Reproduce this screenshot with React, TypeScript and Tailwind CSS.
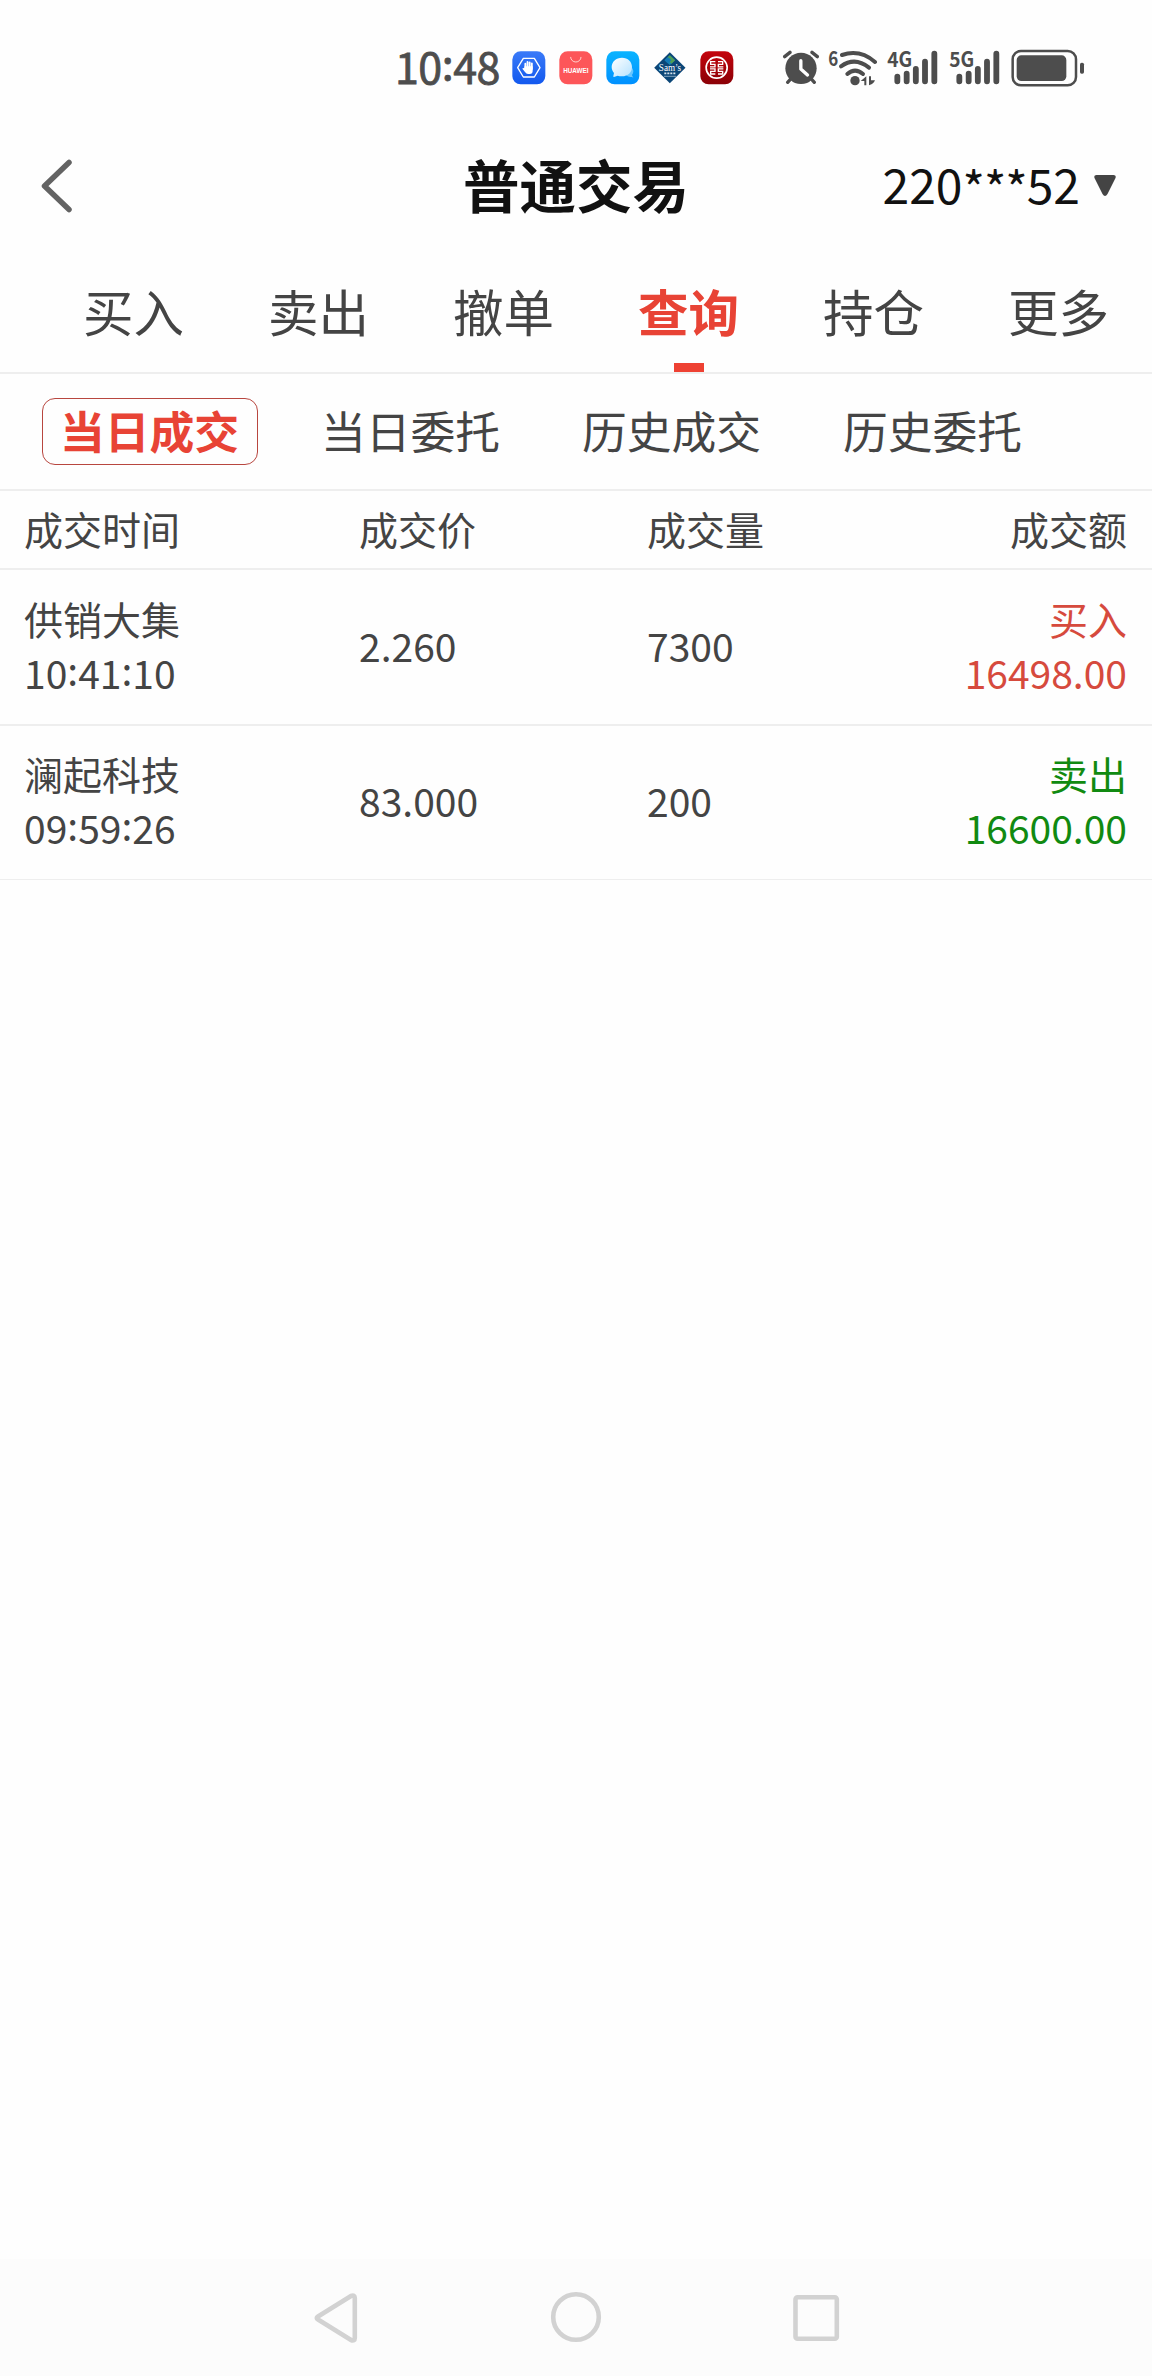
import React from "react";

const FONT = "font-['Noto_Sans_CJK_SC','Noto_Sans',sans-serif]";

function AppIcons() {
  return (
    <svg className="ml-[12px] shrink-0" width="222" height="34" viewBox="395 65 666 102">
      <defs>
        <linearGradient id="guard" x1="0" y1="0" x2="0" y2="1">
          <stop offset="0" stopColor="#3a7af8" />
          <stop offset="1" stopColor="#1258ee" />
        </linearGradient>
        <linearGradient id="chat" x1="0" y1="0" x2="0" y2="1">
          <stop offset="0" stopColor="#0ab4ff" />
          <stop offset="1" stopColor="#0090ff" />
        </linearGradient>
        <linearGradient id="bubble" x1="0" y1="0" x2="1" y2="1">
          <stop offset="0" stopColor="#ffffff" />
          <stop offset="1" stopColor="#b5e2ff" />
        </linearGradient>
        <linearGradient id="bank" x1="0" y1="0" x2="0" y2="1">
          <stop offset="0" stopColor="#c4040c" />
          <stop offset="1" stopColor="#8a0006" />
        </linearGradient>
      </defs>
      <rect x="396" y="66" width="99" height="99" rx="25" fill="url(#guard)" />
      <path d="M429 87h33l17 28-17 28h-33l-17-28z" fill="none" stroke="#fff" strokeWidth="4" strokeLinejoin="round" />
      <path d="M436 119V103M442.500 115V98M449 115V99M455.500 119v-17" stroke="#fff" strokeWidth="5.500" strokeLinecap="round" transform="translate(-1 0)" />
      <path d="M432.500 111h24.500v14q0 9-9 9h-5q-5 0-9-6l-8-10q2-4 6-1z" fill="#fff" />

      <rect x="537" y="66" width="99" height="99" rx="25" fill="#fd5659" />
      <path d="M571 84a15.500 14 0 0 0 31 0" fill="none" stroke="#ffd3cf" strokeWidth="3" strokeLinecap="round" />
      <text x="586.500" y="130" textAnchor="middle" textLength="76" lengthAdjust="spacingAndGlyphs" fontSize="19" fontWeight="700" fill="#fff" className="font-['Liberation_Sans',sans-serif]">HUAWEI</text>

      <rect x="678" y="66" width="99" height="99" rx="25" fill="url(#chat)" />
      <path d="M737 138q10 8 20 4 4 4 0 3 0-4-2-8 8-12 0-22z" fill="#68c6ff" />
      <path d="M725 85c18 0 30 12 30 28s-12 28-30 28c-6 0-9-1-13-2l-11 4q-3 0-2-3l2-9c-4-5-7-11-7-18 0-16 13-28 31-28z" fill="url(#bubble)" />

      <path d="M868.500 69l47 46.500-47 46.500-47-46.500z" fill="#0b4677" />
      <path d="M868.500 78l16 15-16 14-16-14z" fill="#1685b4" />
      <path d="M868.500 78l16 15-11 10-7-8 5-5-10-6z" fill="#4f9e55" />
      <path d="M862 84l11 9-11 9-9-9z" fill="#1478b5" />
      <text x="869" y="125" textAnchor="middle" textLength="67" lengthAdjust="spacingAndGlyphs" fontSize="29" fill="#fff" className="font-['Liberation_Serif',serif]">Sam’s</text>
      <path d="M852 132h34" stroke="#d7e4ee" strokeWidth="5" strokeDasharray="6 3" />
      <path d="M852 141h34" stroke="#9cb8ce" strokeWidth="4" strokeDasharray="4 2" />

      <rect x="960" y="66" width="99" height="99" rx="25" fill="url(#bank)" />
      <circle cx="1009" cy="115" r="31.500" fill="none" stroke="#fff" strokeWidth="5" />
      <path d="M1005 97H991v8h13V112.500H989M1013 97h14v8h-13V112.500h15M989 118.500h15v7.500h-13v8h14M1029 118.500h-15v7.500h13v8h-14" fill="none" stroke="#fff" strokeWidth="4" />
    </svg>
  );
}

function AlarmIcon() {
  return (
    <svg className="ml-[48px] shrink-0" width="38" height="36" viewBox="66 60 114 108">
      <g stroke="#4d4d4d" strokeWidth="10" strokeLinecap="round">
        <path d="M74 80L90 67M156 67l16 13M93 146l-10 11M153 146l10 11" />
      </g>
      <circle cx="123" cy="115" r="47" fill="#4d4d4d" />
      <path d="M122.500 92v25l20 18" fill="none" stroke="#fff" strokeWidth="10" strokeLinecap="round" strokeLinejoin="round" />
    </svg>
  );
}

function WifiIcon() {
  return (
    <svg className="ml-[8px] shrink-0" width="50" height="38" viewBox="204 54 150 114">
      <text x="205" y="104" textLength="30" lengthAdjust="spacingAndGlyphs" fontSize="62" fontWeight="700" fill="#4d4d4d" className="font-['Noto_Sans_CJK_SC',sans-serif]">6</text>
      <g fill="none" stroke="#4d4d4d" strokeWidth="12" strokeLinecap="round">
        <path d="M246 72Q300 54 345 93" />
        <path d="M243 106q42-30 84 4" />
        <path d="M262 129q23-20 47 0" />
      </g>
      <circle cx="285" cy="149" r="14" fill="#4d4d4d" />
      <path d="M319 136v27h-6v-13h-11zM327 163v-27h6v12h12q-2 6-9 11z" fill="#4d4d4d" />
    </svg>
  );
}

function SignalIcon({ label, className }: { label: string; className: string }) {
  return (
    <svg className={className} width="51" height="36" viewBox="380 60 153 108">
      <text x="381" y="110" textLength="75" lengthAdjust="spacingAndGlyphs" fontSize="62" fontWeight="700" fill="#4d4d4d" className="font-['Noto_Sans_CJK_SC',sans-serif]">{label}</text>
      <path d="M411 140v14M439 131v23M466.500 117v37M494 95v59M522 71v83" stroke="#4d4d4d" strokeWidth="17.500" strokeLinecap="round" />
    </svg>
  );
}

function BatteryIcon() {
  return (
    <svg className="ml-[11px] shrink-0" width="74" height="38" viewBox="752 55 222 114">
      <rect x="757" y="61" width="190" height="103" rx="25" fill="none" stroke="#4d4d4d" strokeWidth="7.500" />
      <rect x="769" y="74" width="149" height="77" rx="14" fill="#4d4d4d" />
      <rect x="959" y="96" width="12" height="33" rx="5" fill="#4d4d4d" />
    </svg>
  );
}

function StatusBar() {
  return (
    <div className="flex h-[136px] shrink-0 items-center pl-[395px]">
      <span className="w-[105px] shrink-0 pb-[5px] text-[43px] leading-none tracking-[-0.5px] whitespace-nowrap text-[#4d4d4d] [-webkit-text-stroke:0.8px_#4d4d4d]">
        10<span className="relative -top-[4px]">:</span>48
      </span>
      <AppIcons />
      <AlarmIcon />
      <WifiIcon />
      <SignalIcon label="4G" className="ml-[9px] shrink-0" />
      <SignalIcon label="5G" className="ml-[11px] shrink-0" />
      <BatteryIcon />
    </div>
  );
}

function Header() {
  return (
    <header className="grid h-[100px] shrink-0 grid-cols-[1fr_auto_1fr] items-center pr-[36px] pl-[40px]">
      <svg width="34" height="54" viewBox="0 0 34 54" fill="none" stroke="#636363" strokeWidth="5.5" strokeLinecap="round" strokeLinejoin="round">
        <path d="M29 3.500L4.500 27 29 50.500" />
      </svg>
      <h1 className="mr-[4px] pb-[5px] text-[56.5px] leading-none font-bold text-[#111]">普通交易</h1>
      <div className="flex items-center justify-end">
        <span className="pb-[6px] text-[48px] leading-none text-[#111]">
          220<span className="relative top-[3px] tracking-[-1px]">***</span>52
        </span>
        <svg className="ml-[14px]" width="22" height="22" viewBox="0 0 22 22" fill="#444">
          <path d="M2.500 0h17q3 0 2 3l-8 16q-2.500 4-5 0L.5 3q-1-3 2-3z" />
        </svg>
      </div>
    </header>
  );
}

const tabs = ["买入", "卖出", "撤单", "查询", "持仓", "更多"];

function Tabs() {
  return (
    <nav className="flex h-[138px] shrink-0 border-b-2 border-[#eee] pl-[41px]">
      {tabs.map((tab) => {
        const active = tab === "查询";
        return (
          <div key={tab} className="flex w-[185px] shrink-0 flex-col items-center justify-between pt-[49px]">
            <span className={active ? "text-[50.5px] leading-[50px] font-bold text-[#e84335]" : "text-[50.5px] leading-[50px] text-[#444]"}>{tab}</span>
            {active && <span className="h-[9px] w-[30px] bg-[#ee4133]" />}
          </div>
        );
      })}
    </nav>
  );
}

const filters = ["当日成交", "当日委托", "历史成交", "历史委托"];

function Filters() {
  return (
    <div className="flex h-[117px] shrink-0 items-center gap-[45px] border-b-2 border-[#eee] pl-[42px]">
      {filters.map((f, i) => (
        <span
          key={f}
          className={
            i === 0
              ? "flex h-[67px] w-[216px] items-center justify-center rounded-[13px] border border-[#b8463f] pr-[1px] pb-[2px] text-[44.8px] leading-none font-bold text-[#e84335]"
              : "flex h-[67px] w-[216px] items-center justify-center pr-[1px] pb-[2px] text-[44.8px] leading-none text-[#444]"
          }
        >
          {f}
        </span>
      ))}
    </div>
  );
}

const GRID = "grid grid-cols-[335px_288px_1fr_auto] items-center pr-[25px] pl-[24px]";

function Time({ value }: { value: string }) {
  return (
    <>
      {value.split(":").map((part, i) => (
        <React.Fragment key={i}>
          {i > 0 && <span className="relative -top-[3px]">:</span>}
          {part}
        </React.Fragment>
      ))}
    </>
  );
}

const trades = [
  { name: "供销大集", time: "10:41:10", price: "2.260", volume: "7300", side: "买入", amount: "16498.00", tone: "text-[#d64a3d]" },
  { name: "澜起科技", time: "09:59:26", price: "83.000", volume: "200", side: "卖出", amount: "16600.00", tone: "text-[#118a11]" },
];

function TradeTable() {
  return (
    <section className="text-[39px] leading-[54px] text-[#444]">
      <div className={GRID + " h-[79px] border-b-2 border-[#eee] pb-[4px]"}>
        <span>成交时间</span>
        <span>成交价</span>
        <span>成交量</span>
        <span>成交额</span>
      </div>
      {trades.map((t) => (
        <div key={t.name} className={`${GRID} h-[156px] border-b-2 border-[#eee] pb-[4px] last:h-[154px] last:border-b last:pb-[5px]`}>
          <div className="flex flex-col">
            <span>{t.name}</span>
            <span><Time value={t.time} /></span>
          </div>
          <span>{t.price}</span>
          <span>{t.volume}</span>
          <div className={`flex flex-col items-end ${t.tone}`}>
            <span>{t.side}</span>
            <span>{t.amount}</span>
          </div>
        </div>
      ))}
    </section>
  );
}

function NavBar() {
  return (
    <footer className="mt-auto flex h-[117px] shrink-0 items-center justify-center bg-[#fcfcfc]">
      <svg width="530" height="56" viewBox="311 2290 530 56" fill="none" stroke="#d2d2d2" strokeWidth="4.6" strokeLinejoin="round">
        <path d="M318 2316.500l33-20.500q3.800-1.500 3.800 2v40q0 3.500-3.800 2l-33-20.500q-2.500-1.500 0-3z" />
        <circle cx="576" cy="2317" r="22.800" />
        <rect x="795.500" y="2297.300" width="41.300" height="41.500" rx="2" />
      </svg>
    </footer>
  );
}

export default function App() {
  return (
    <div className={`flex h-[2376px] w-[1152px] flex-col overflow-hidden bg-[#fefefe] ${FONT}`}>
      <StatusBar />
      <Header />
      <Tabs />
      <Filters />
      <TradeTable />
      <NavBar />
    </div>
  );
}
